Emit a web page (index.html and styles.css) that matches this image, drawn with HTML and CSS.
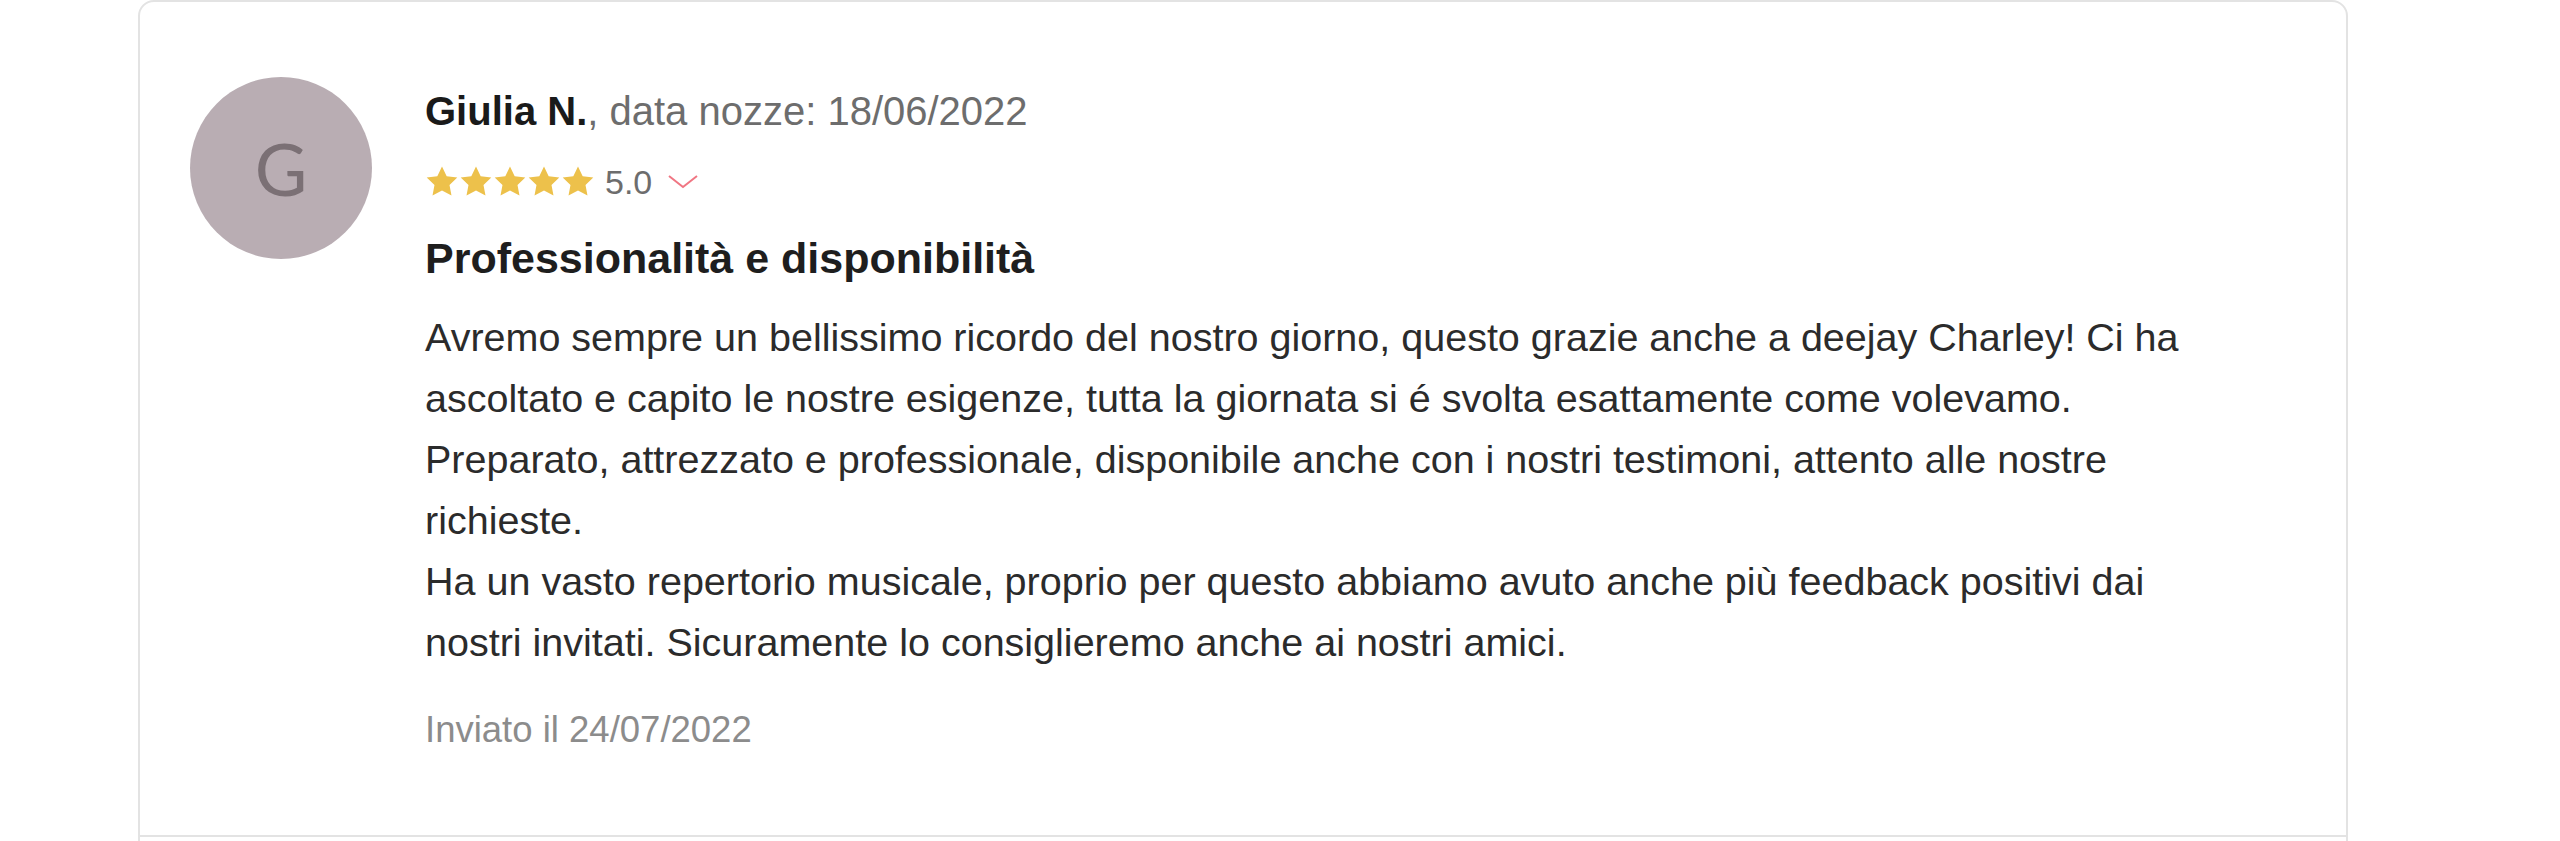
FILE: index.html
```html
<!DOCTYPE html>
<html lang="it">
<head>
    <meta charset="UTF-8">
    <meta name="viewport" content="width=device-width, initial-scale=1.0">
    <title>Recensione</title>
    <link rel="stylesheet" href="styles.css">
</head>
<body>
    <div class="reviews">
        <div class="review-card">
            <div class="review">
                <div class="avatar">G</div>

                <div class="review-content">
                    <div class="review-author">
                        <strong>Giulia N.</strong>, data nozze: 18/06/2022
                    </div>

                    <div class="review-rating">
                        <div class="stars">
                            <svg viewBox="0 0 24 24"><path d="M12 1l3.3 6.9 7.5 1-5.5 5.2 1.4 7.5L12 18l-6.7 3.6 1.4-7.5-5.5-5.2 7.5-1z"/></svg>
                            <svg viewBox="0 0 24 24"><path d="M12 1l3.3 6.9 7.5 1-5.5 5.2 1.4 7.5L12 18l-6.7 3.6 1.4-7.5-5.5-5.2 7.5-1z"/></svg>
                            <svg viewBox="0 0 24 24"><path d="M12 1l3.3 6.9 7.5 1-5.5 5.2 1.4 7.5L12 18l-6.7 3.6 1.4-7.5-5.5-5.2 7.5-1z"/></svg>
                            <svg viewBox="0 0 24 24"><path d="M12 1l3.3 6.9 7.5 1-5.5 5.2 1.4 7.5L12 18l-6.7 3.6 1.4-7.5-5.5-5.2 7.5-1z"/></svg>
                            <svg viewBox="0 0 24 24"><path d="M12 1l3.3 6.9 7.5 1-5.5 5.2 1.4 7.5L12 18l-6.7 3.6 1.4-7.5-5.5-5.2 7.5-1z"/></svg>
                        </div>
                        <span class="rating-value">5.0</span>
                        <svg class="chevron" viewBox="0 0 30 14"><polyline points="1,1 15,12 29,1"/></svg>
                    </div>

                    <h3 class="review-title">Professionalità e disponibilità</h3>

                    <p class="review-text">Avremo sempre un bellissimo ricordo del nostro giorno, questo grazie anche a deejay Charley! Ci ha ascoltato e capito le nostre esigenze, tutta la giornata si é svolta esattamente come volevamo. Preparato, attrezzato e professionale, disponibile anche con i nostri testimoni, attento alle nostre richieste.<br>Ha un vasto repertorio musicale, proprio per questo abbiamo avuto anche più feedback positivi dai nostri invitati. Sicuramente lo consiglieremo anche ai nostri amici.</p>

                    <div class="review-date">Inviato il 24/07/2022</div>
                </div>
            </div>

            <div class="review-reply"></div>
        </div>
    </div>
</body>
</html>
```

FILE: styles.css
```css
body {
    margin: 0;
    padding: 0;
    background: #fff;
    font-family: "Liberation Sans", Arial, sans-serif;
    color: #2b2b2b;
}

.reviews {
    height: 841px;
    overflow: hidden;
    padding-left: 138px;
}

.review-card {
    width: 2210px;
    box-sizing: border-box;
    border: 2px solid #e3e3e3;
    border-radius: 16px;
    background: #fff;
}

.review {
    display: flex;
    align-items: flex-start;
    padding: 75px 128px 85px 50px;
    border-bottom: 2px solid #e3e3e3;
}

.avatar {
    flex: 0 0 182px;
    width: 182px;
    height: 182px;
    border-radius: 50%;
    background-color: #b9adb3;
    color: #7b7075;
    font-family: Lato, "Liberation Sans", sans-serif;
    font-weight: 400;
    font-size: 72px;
    display: flex;
    align-items: center;
    justify-content: center;
}

.review-content {
    margin-left: 53px;
    padding-top: 12px;
}

.review-author {
    font-size: 40px;
    line-height: 44px;
    color: #6d6d6d;
}

.review-author strong {
    color: #1a1a1a;
}

.review-rating {
    display: flex;
    align-items: center;
    margin-top: 31px;
    height: 36px;
}

.stars {
    display: flex;
}

.stars svg {
    width: 34px;
    height: 34px;
    fill: #edc14b;
}

.rating-value {
    margin-left: 10px;
    font-size: 34px;
    color: #6d6d6d;
}

.chevron {
    width: 30px;
    height: 14px;
    margin-left: 16px;
    fill: none;
    stroke: #f07683;
    stroke-width: 2;
}

.review-title {
    margin: 33px 0 0;
    font-size: 43px;
    line-height: 50px;
    font-weight: bold;
    color: #1e1e1e;
}

.review-text {
    margin: 24px 0 0;
    font-size: 39.5px;
    line-height: 61px;
    color: #2b2b2b;
}

.review-date {
    margin-top: 37px;
    font-size: 36.5px;
    line-height: 40px;
    color: #8c8c8c;
}

.review-reply {
    height: 200px;
}
```
